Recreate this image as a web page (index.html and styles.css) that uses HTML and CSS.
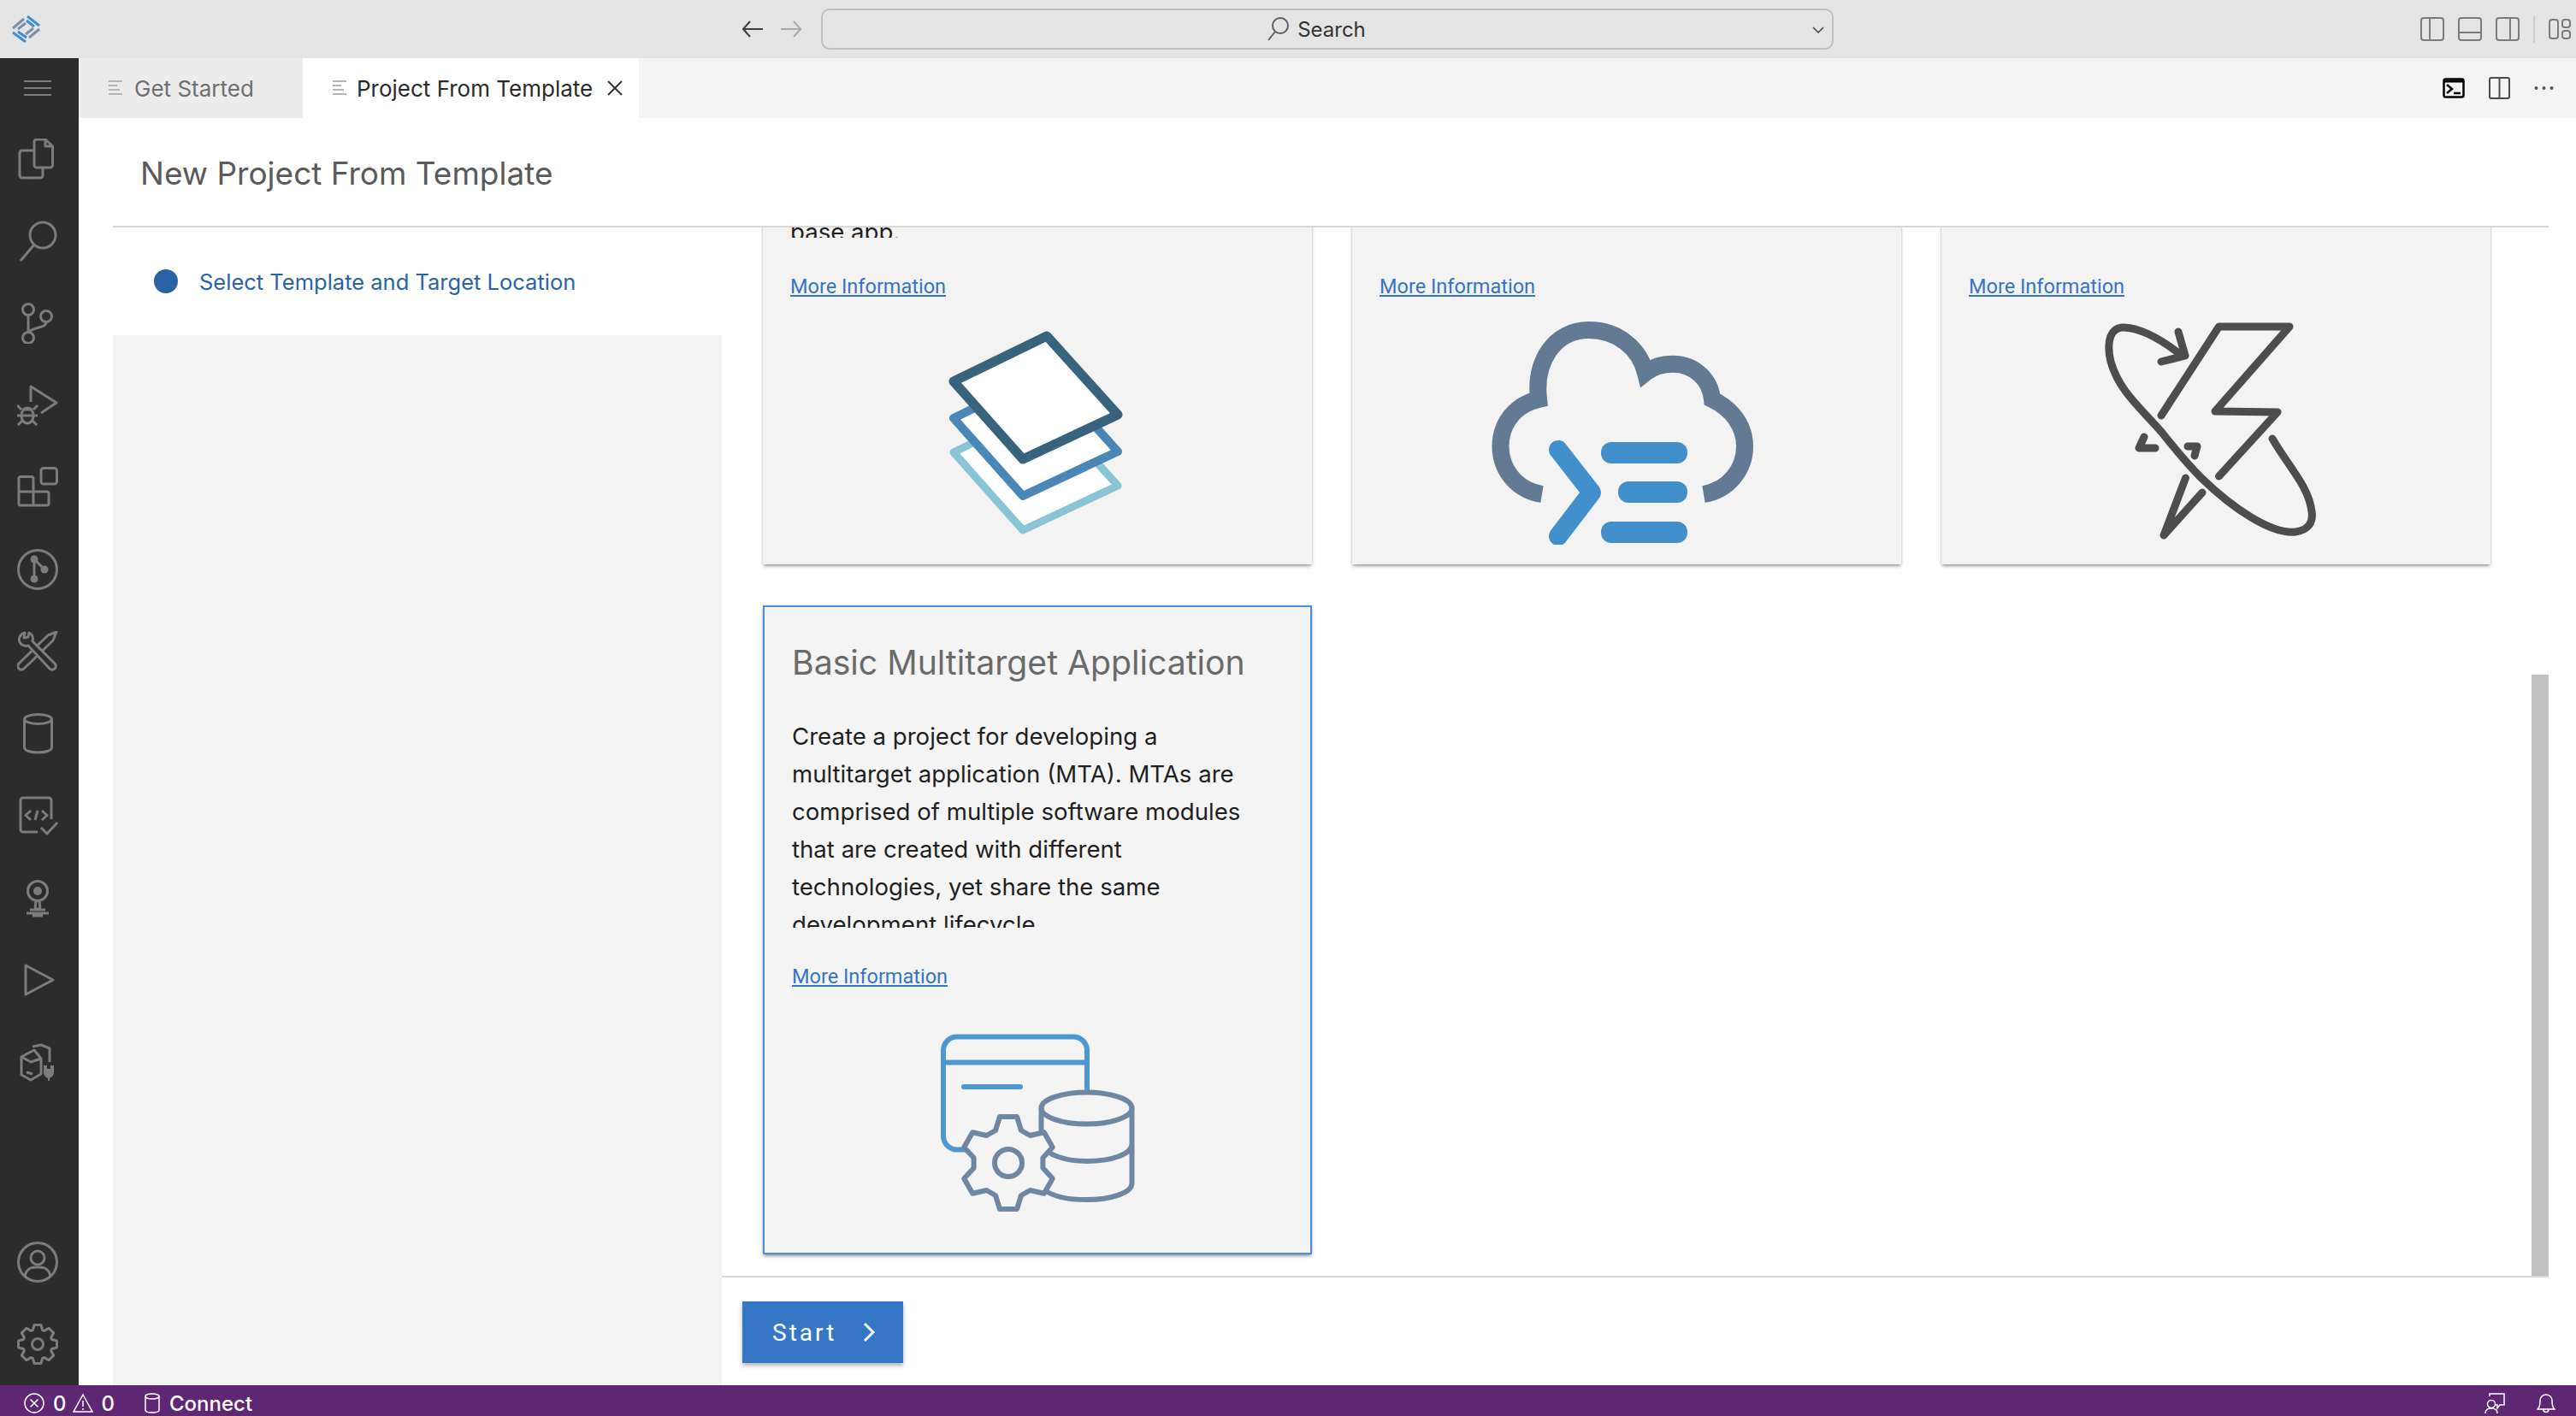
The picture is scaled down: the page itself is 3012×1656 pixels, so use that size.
FILE: index.html
```html
<!DOCTYPE html>
<html lang="en">
<head>
  <meta charset="UTF-8">
  <title>New Project From Template</title>
  <link rel="stylesheet" href="styles.css">
</head>
<body>

  <header class="titlebar">
    <div class="titlebar-left">
      <svg class="logo" viewBox="0 0 33 32" fill="none" stroke-width="3">
        <path stroke="#3d8fd1" d="M18 1 32 12M17 6 26 13M1 20 16 31M7 19 17 26"/>
        <path stroke="#7c8fa6" d="M32 16 20 26M25 15 16 22M1 15 14 4M7 16 16 9"/>
      </svg>
      <div class="nav-arrows">
        <svg class="nav-arrow" viewBox="0 0 25 20"><path d="M9 1 1 10 9 19M1 10H24"/></svg>
        <svg class="nav-arrow nav-arrow-off" viewBox="0 0 25 20"><path d="M16 1 24 10 16 19M1 10H24"/></svg>
      </div>
    </div>
    <div class="command-center">
      <svg class="command-search" viewBox="0 0 26 28"><circle cx="16" cy="10" r="9"/><path d="M10 17 2 27"/></svg>
      <span>Search</span>
      <svg class="command-chevron" viewBox="0 0 14 8"><path d="M1 1 7 7 13 1"/></svg>
    </div>
    <div class="layout-icons">
      <svg class="layout-icon" viewBox="0 0 28 28"><rect x="1" y="1" width="26" height="26" rx="3"/><path d="M11 1V27"/></svg>
      <svg class="layout-icon" viewBox="0 0 28 28"><rect x="1" y="1" width="26" height="26" rx="3"/><path d="M1 18H27"/></svg>
      <svg class="layout-icon" viewBox="0 0 28 28"><rect x="1" y="1" width="26" height="26" rx="3"/><path d="M17 1V27"/></svg>
      <span class="layout-sep"></span>
      <svg class="layout-icon layout-icon-last" viewBox="0 0 26 24"><rect x="1" y="1" width="10" height="22" rx="3"/><rect x="16" y="1" width="9" height="9" rx="3"/><rect x="16" y="14" width="9" height="9" rx="3"/></svg>
    </div>
  </header>

  <div class="workbench">
    <nav class="sidebar">
      <div class="side-menu">
        <svg class="side-icon" viewBox="0 0 32 18"><path d="M0 1H32M0 9H32M0 17H32"/></svg>
      </div>
      <div class="side-item">
        <svg class="side-icon" viewBox="0 0 48 48"><path d="M20 31V4a3 3 0 0 1 3-3H33L41.5 9V31a3 3 0 0 1-3 3H23a3 3 0 0 1-3-3ZM33 1V9H41.5"/><path d="M20 14H6a3 3 0 0 0-3 3V43a3 3 0 0 0 3 3H27a3 3 0 0 0 3-3V34"/></svg>
      </div>
      <div class="side-item">
        <svg class="side-icon" viewBox="0 0 48 48"><circle cx="30" cy="17" r="15"/><path d="M20 28 4 47"/></svg>
      </div>
      <div class="side-item">
        <svg class="side-icon" viewBox="0 0 48 48"><circle cx="13" cy="8" r="6.5"/><circle cx="13" cy="41" r="6.5"/><circle cx="34" cy="16" r="6.5"/><path d="M13 14.500V34.500M34 22.500C34 30 20 28 14 34"/></svg>
      </div>
      <div class="side-item">
        <svg class="side-icon" viewBox="0 0 48 48"><path d="M16 20V2L46 21 28 33"/><ellipse cx="12" cy="36" rx="7" ry="9"/><path d="M6 29H18M0 24 5 29M24 24 19 29M0 36H24M1 47 6 42M23 47 18 42"/></svg>
      </div>
      <div class="side-item">
        <svg class="side-icon" viewBox="0 0 48 48"><rect x="28" y="1.500" width="18.500" height="18.500" rx="3"/><path d="M4 11.500H17a2 2 0 0 1 2 2V29H35a2 2 0 0 1 2 2V43a2 2 0 0 1-2 2H4a2 2 0 0 1-2-2V13.500a2 2 0 0 1 2-2ZM2 29H19V45"/></svg>
      </div>
      <div class="side-item">
        <svg class="side-icon" viewBox="0 0 48 48"><circle cx="24" cy="24" r="22.500"/><path d="M20 12V35M20 12 32 24"/><circle class="side-solid" cx="20" cy="12" r="4.500"/><circle class="side-solid" cx="32" cy="24" r="4.500"/><circle class="side-solid" cx="20" cy="35" r="4.500"/></svg>
      </div>
      <div class="side-item">
        <svg class="side-icon" viewBox="0 0 48 48"><path d="M46 1 36 5 2 38a4 4 0 0 0 6 6L42 11Z"/><path class="side-mask" d="M9 2C4 3 1 8 3 13 5 17 10 18 13 17L38 44a4 4 0 0 0 6-6L18 12C19 8 18 4 14 2L13 7 8 8Z"/></svg>
      </div>
      <div class="side-item">
        <svg class="side-icon" viewBox="0 0 48 48"><ellipse cx="24.500" cy="7" rx="16" ry="5.500"/><path d="M8.500 7V40C8.500 44 16 46 24.500 46S40.500 44 40.500 40V7"/></svg>
      </div>
      <div class="side-item">
        <svg class="side-icon" viewBox="0 0 48 48"><path d="M40 28V6a3 3 0 0 0-3-3H7a3 3 0 0 0-3 3V40a3 3 0 0 0 3 3H24M28 38 35 45 47 32M16 18 10 23.500 16 29M21 29 24 18M29 18 35 23.500 29 29"/></svg>
      </div>
      <div class="side-item">
        <svg class="side-icon" viewBox="0 0 48 48"><circle cx="24" cy="16" r="11.500"/><circle class="side-solid" cx="24" cy="16" r="5"/><path d="M22 27 21 37H27L26 27M15 38H33M11 42H37M18 45H30"/></svg>
      </div>
      <div class="side-item">
        <svg class="side-icon" viewBox="0 0 48 48"><path d="M10 7 42 24 10 41Z"/></svg>
      </div>
      <div class="side-item">
        <svg class="side-icon" viewBox="0 0 48 48"><path d="M28 20V38L16 45 5 39V18L20 10ZM5 18 16 24 28 20M18 6 28 4 38 8V24M11 36 18 38"/><path class="side-solid" d="M31 28H35V32H39V28H43V36C43 40 40 42 38 43V46H36V43C34 42 31 40 31 36Z"/></svg>
      </div>
      <div class="side-spacer"></div>
      <div class="side-item">
        <svg class="side-icon" viewBox="0 0 48 48"><circle cx="24" cy="24" r="22.500"/><circle cx="24" cy="19" r="8"/><path d="M9 40C12 30 18 30 24 30S36 30 39 40"/></svg>
      </div>
      <div class="side-item">
        <svg class="side-icon" viewBox="-24 -24 48 48"><polygon points="-5.500,-16.500 -4,-22.500 4,-22.500 5.500,-16.500 7.800,-15.600 13.100,-18.700 18.700,-13.100 15.600,-7.800 16.500,-5.500 22.500,-4 22.500,4 16.500,5.500 15.600,7.800 18.700,13.100 13.100,18.700 7.800,15.600 5.500,16.500 4,22.500 -4,22.500 -5.500,16.500 -7.800,15.600 -13.100,18.700 -18.700,13.100 -15.600,7.800 -16.500,5.500 -22.500,4 -22.500,-4 -16.500,-5.500 -15.600,-7.800 -18.700,-13.100 -13.100,-18.700 -7.800,-15.600"/><circle r="6.500"/></svg>
      </div>
    </nav>

    <main class="editor">
      <div class="tabs">
        <div class="tab">
          <svg class="tab-icon" viewBox="0 0 16 18"><path d="M0 1H16M0 6H10M0 11H13M0 16H16"/></svg>
          <span>Get Started</span>
        </div>
        <div class="tab tab-active">
          <svg class="tab-icon" viewBox="0 0 16 18"><path d="M0 1H16M0 6H10M0 11H13M0 16H16"/></svg>
          <span>Project From Template</span>
          <svg class="tab-close" viewBox="0 0 18 18"><path d="M1 1 17 17M17 1 1 17"/></svg>
        </div>
        <div class="tab-actions">
          <svg class="tab-terminal" viewBox="0 0 26 24"><rect x="1.500" y="1.500" width="23" height="21" rx="2"/><path class="tab-terminal-bar" d="M1.500 4H24.500"/><path d="M5 8 11 13 5 18M13 18H21"/></svg>
          <svg class="tab-split" viewBox="0 0 25 26"><rect x="1" y="1" width="23" height="24" rx="2"/><path d="M12.500 1V25"/></svg>
          <svg class="tab-more" viewBox="0 0 23 6"><circle cx="2.500" cy="3" r="2"/><circle cx="11.500" cy="3" r="2"/><circle cx="20.500" cy="3" r="2"/></svg>
        </div>
      </div>

      <div class="wizard">
        <div class="wizard-header">
          <h1>New Project From Template</h1>
        </div>
        <div class="wizard-body">
          <aside class="steps">
            <div class="step">
              <span class="step-dot"></span>
              <span>Select Template and Target Location</span>
            </div>
            <div class="steps-panel"></div>
          </aside>

          <section class="content">
            <div class="viewport">
              <div class="cards">
                <article class="card">
                  <div class="card-text">
                    <p class="card-desc card-desc-tail">base app.</p>
                  </div>
                  <a class="card-link" href="#">More Information</a>
                  <div class="card-image">
                    <svg viewBox="0 0 320 264">
                      <path d="M171 103 62 156 143 247 254 195Z" fill="#fff" stroke="#89c5d7" stroke-width="9" stroke-linejoin="round"/>
                      <path d="M171 63 62 116 143 207 254 155Z" fill="#fff" stroke="#4a87b7" stroke-width="10" stroke-linejoin="round"/>
                      <path d="M171 20 62 73 143 164 254 112Z" fill="#fff" stroke="#37637c" stroke-width="11" stroke-linejoin="round"/>
                    </svg>
                  </div>
                </article>

                <article class="card">
                  <div class="card-text"></div>
                  <a class="card-link" href="#">More Information</a>
                  <div class="card-image">
                    <svg viewBox="0 0 320 264" fill="none">
                      <path stroke="#637a94" stroke-width="20" d="M61 205C30 200 12.500 175 12.500 149 12.500 122 30 100 57 94 52 50 75 13 116 13 150 13 175 35 182 63 192 55 202 52.700 214 52.700 240 52.700 258 72 260 94 283 105 298 125 298 149 298 175 280 200 250 205"/>
                      <path stroke="#4190cc" stroke-width="22" stroke-linecap="round" stroke-linejoin="round" d="M80 153 119 203 80 254"/>
                      <rect x="130" y="144" width="101" height="25" rx="12" fill="#4190cc"/>
                      <rect x="150" y="190" width="81" height="25" rx="12" fill="#4190cc"/>
                      <rect x="130" y="237" width="101" height="25" rx="12" fill="#4190cc"/>
                    </svg>
                  </div>
                </article>

                <article class="card">
                  <div class="card-text"></div>
                  <a class="card-link" href="#">More Information</a>
                  <div class="card-image">
                    <svg viewBox="0 0 320 264" fill="none" stroke="#4d4d4d" stroke-width="9" stroke-linecap="round" stroke-linejoin="round">
                      <path d="M120 43C92 20 66 9 50 10 38 11 31 24 37 50 47 85 72 104 97 133 112 152 127 170 143 186 180 222 225 252 253 249 268 247 274 238 272 225 268 195 245 173 226 140"/>
                      <path d="M116 15 124 43 96 50"/>
                      <path d="M96 113 163.500 9H246L159 108 232 109 163.500 184"/>
                      <path d="M76 138 70 151H89M127 149H138L135 160"/>
                      <path d="M124.500 186 99 253 144 203"/>
                    </svg>
                  </div>
                </article>

                <article class="card card-selected">
                  <div class="card-text">
                    <h3 class="card-title">Basic Multitarget Application</h3>
                    <p class="card-desc">Create a project for developing a multitarget application (MTA). MTAs are comprised of multiple software modules that are created with different technologies, yet share the same development lifecycle.</p>
                  </div>
                  <a class="card-link" href="#">More Information</a>
                  <div class="card-image">
                    <svg viewBox="0 0 320 264" fill="none" stroke-width="6" stroke-linejoin="round">
                      <path stroke="#4e98d2" d="M217 96V48A16 16 0 0 0 201 32.500H65A16 16 0 0 0 49 48V148A16 16 0 0 0 65 164.500H78M49 62.500H217"/>
                      <path stroke="#4e98d2" stroke-linecap="round" d="M73 91H139"/>
                      <g stroke="#6f87a3">
                        <ellipse cx="216.500" cy="116" rx="53" ry="18.500"/>
                        <path d="M163.500 116V160M269.500 116V204C269.500 215 245 223 216.500 223 195 223 177 219 168 212M163.500 158C170 172 195 178 216.500 178 245 178 269.500 170 269.500 158"/>
                        <g transform="translate(125 180)">
                          <polygon fill="#f4f4f4" points="-15,-38 -10,-54 10,-54 15,-38 25.400,-32 41.800,-35.700 51.800,-18.300 40.400,-6 40.400,6 51.800,18.300 41.800,35.700 25.400,32 15,38 10,54 -10,54 -15,38 -25.400,32 -41.800,35.700 -51.800,18.300 -40.400,6 -40.400,-6 -51.800,-18.300 -41.800,-35.700 -25.400,-32"/>
                          <circle r="16"/>
                        </g>
                      </g>
                    </svg>
                  </div>
                </article>
              </div>
              <div class="scroll-thumb"></div>
            </div>
            <div class="wizard-footer">
              <button class="start-btn">
                <span>Start</span>
                <svg viewBox="0 0 15 24"><path d="M2 2 12 12 2 22"/></svg>
              </button>
            </div>
          </section>
        </div>
      </div>
    </main>
  </div>

  <footer class="statusbar">
    <svg class="status-icon status-error" viewBox="0 0 24 24"><circle cx="12" cy="12" r="11"/><path d="M7.500 7.500 16.500 16.500M16.500 7.500 7.500 16.500"/></svg>
    <span class="status-count">0</span>
    <svg class="status-icon status-warn" viewBox="0 0 24 24"><path d="M12 2 23 22H1ZM12 9V16M12 18V20"/></svg>
    <span class="status-count">0</span>
    <svg class="status-icon status-db" viewBox="0 0 18 24"><ellipse cx="9" cy="4" rx="8" ry="3"/><path d="M1 4V20C1 22 5 23 9 23S17 22 17 20V4"/></svg>
    <span class="status-connect">Connect</span>
    <span class="status-spacer"></span>
    <svg class="status-icon status-feedback" viewBox="0 0 24 24"><path d="M6 4V1H23V14H18L15 18V14H13"/><circle cx="8" cy="13" r="4.500"/><path d="M1 24C1 20 4 18 8 18S15 20 15 24"/></svg>
    <svg class="status-icon status-bell" viewBox="0 0 22 24"><path d="M1 19C4 17 4 13 4 9A7 7 0 0 1 18 9C18 13 18 17 21 19ZM8 19.500A3 3 0 0 0 14 19.500"/></svg>
  </footer>

</body>
</html>
```

FILE: styles.css
```css
* {
  box-sizing: border-box;
}

body {
  margin: 0;
  height: 100vh;
  display: flex;
  flex-direction: column;
  overflow: hidden;
  font-family: Inter, "Liberation Sans", sans-serif;
  background-color: #fff;
}

svg {
  display: block;
  flex-shrink: 0;
}

/* title bar */
.titlebar {
  height: 68px;
  flex-shrink: 0;
  display: grid;
  grid-template-columns: 960px 1184px 1fr;
  align-items: center;
  background-color: #e4e4e4;
}

.titlebar-left {
  display: flex;
  align-items: center;
  justify-content: space-between;
  padding-left: 14px;
  padding-right: 23px;
}

.logo {
  width: 33px;
  height: 32px;
}

.nav-arrows {
  display: flex;
  gap: 19px;
}

.nav-arrow {
  width: 25px;
  height: 20px;
  fill: none;
  stroke: #3f3f3f;
  stroke-width: 2;
}

.nav-arrow-off {
  stroke: #a9a9a9;
}

.command-center {
  position: relative;
  height: 48px;
  display: flex;
  align-items: center;
  justify-content: center;
  gap: 10px;
  padding-right: 26px;
  border: 2px solid #c0c0c0;
  border-radius: 10px;
  font-size: 24px;
  color: #333;
}

.command-search {
  width: 26px;
  height: 28px;
  fill: none;
  stroke: #5f5f5f;
  stroke-width: 2;
}

.command-chevron {
  position: absolute;
  right: 9px;
  top: 19px;
  width: 14px;
  height: 8px;
  fill: none;
  stroke: #444;
  stroke-width: 1.500;
}

.layout-icons {
  display: flex;
  align-items: center;
  padding-left: 686px;
  gap: 16px;
}

.layout-icon {
  width: 28px;
  height: 28px;
  fill: none;
  stroke: #7b7b7b;
  stroke-width: 2;
}

.layout-sep {
  width: 2px;
  height: 31px;
  background-color: #cacaca;
}

.layout-icon-last {
  width: 26px;
  height: 24px;
}

/* side bar */
.workbench {
  flex: 1;
  display: flex;
  min-height: 0;
}

.sidebar {
  width: 92px;
  flex-shrink: 0;
  display: flex;
  flex-direction: column;
  background-color: #2c2c2c;
}

.side-menu {
  height: 70px;
  display: flex;
  align-items: center;
  padding-left: 28px;
}

.side-menu .side-icon {
  width: 32px;
  height: 18px;
  stroke-width: 2;
}

.side-item {
  height: 96px;
  display: flex;
  align-items: center;
  padding-left: 20px;
}

.side-spacer {
  flex: 1;
}

.side-icon {
  width: 48px;
  height: 48px;
  fill: none;
  stroke: #7c7c7c;
  stroke-width: 3;
  stroke-linejoin: round;
}

.side-solid {
  fill: #7c7c7c;
  stroke: none;
}

.side-mask {
  fill: #2c2c2c;
}

/* tabs */
.editor {
  flex: 1;
  min-width: 0;
  display: flex;
  flex-direction: column;
}

.tabs {
  height: 70px;
  flex-shrink: 0;
  display: flex;
  align-items: center;
  background-color: #f3f3f3;
  font-size: 26px;
}

.tab {
  height: 100%;
  width: 262px;
  display: flex;
  align-items: center;
  gap: 14px;
  padding-left: 35px;
  background-color: #ececec;
  color: #6f6f6f;
}

.tab-active {
  width: 393px;
  padding-left: 35px;
  gap: 12px;
  background-color: #fff;
  color: #2a2a2a;
}

.tab-icon {
  width: 16px;
  height: 18px;
  fill: none;
  stroke: #b5b5b5;
  stroke-width: 2;
}

.tab-close {
  width: 18px;
  height: 18px;
  margin-left: 5px;
  fill: none;
  stroke: #333;
  stroke-width: 2;
}

.tab-actions {
  flex: 1;
  display: flex;
  align-items: center;
  justify-content: flex-end;
  gap: 28px;
  padding-right: 26px;
}

.tab-terminal {
  width: 26px;
  height: 24px;
  fill: none;
  stroke: #000;
  stroke-width: 2.500;
}

.tab-terminal-bar {
  stroke-width: 3;
}

.tab-split {
  width: 25px;
  height: 26px;
  fill: none;
  stroke: #4a4a4a;
  stroke-width: 2;
}

.tab-more {
  width: 23px;
  height: 6px;
  fill: #555;
}

/* wizard */
.wizard {
  flex: 1;
  min-height: 0;
  display: flex;
  flex-direction: column;
  margin-left: 40px;
  margin-right: 32px;
}

.wizard-header {
  height: 128px;
  flex-shrink: 0;
  display: flex;
  align-items: center;
  padding-left: 32px;
  padding-top: 2px;
  border-bottom: 2px solid #d8d8d8;
}

.wizard-header h1 {
  margin: 0;
  font-size: 37px;
  font-weight: 400;
  color: #5a5a5a;
}

.wizard-body {
  flex: 1;
  min-height: 0;
  display: flex;
}

.steps {
  width: 712px;
  flex-shrink: 0;
  display: flex;
  flex-direction: column;
}

.step {
  height: 126px;
  display: flex;
  align-items: center;
  gap: 25px;
  padding-left: 48px;
  font-size: 25.500px;
  color: #2a63a5;
}

.step-dot {
  width: 28px;
  height: 28px;
  border-radius: 50%;
  background-color: #2a62a4;
}

.steps-panel {
  flex: 1;
  background-color: #f3f3f3;
}

.content {
  flex: 1;
  min-width: 0;
  display: flex;
  flex-direction: column;
}

.viewport {
  position: relative;
  flex: 1;
  min-height: 0;
  display: flex;
  flex-direction: column;
  justify-content: flex-end;
  overflow: hidden;
  padding: 0 0 25px 48px;
  border-bottom: 2px solid #d8d8d8;
}

.cards {
  flex-shrink: 0;
  display: grid;
  grid-template-columns: repeat(3, 641.500px);
  column-gap: 47.500px;
  row-gap: 48px;
}

.card {
  height: 759px;
  display: flex;
  flex-direction: column;
  padding: 0 32px;
  background-color: #f3f3f3;
  box-shadow: 0 3px 4px -1px rgba(0, 0, 0, 0.4), 0 0 3px rgba(0, 0, 0, 0.12);
}

.card-selected {
  padding-left: 34px;
  background-color: #f4f4f4;
  outline: 2px solid #4a90e2;
  outline-offset: -2px;
}

.card-text {
  height: 377px;
  flex-shrink: 0;
  overflow: hidden;
  padding-top: 41px;
}

.card-title {
  margin: 0 0 38px;
  height: 52px;
  line-height: 52px;
  font-size: 39.200px;
  font-weight: 400;
  color: #6a6a6a;
}

.card-desc {
  margin: 0;
  max-width: 540px;
  line-height: 44px;
  font-size: 27.600px;
  color: #1f1f1f;
}

.card-desc-tail {
  padding-top: 307px;
}

.card-link {
  margin-top: 42px;
  height: 30px;
  line-height: 30px;
  font-family: Roboto, sans-serif;
  font-size: 23.500px;
  color: #3574c8;
}

.card-image {
  flex: 1;
  display: flex;
  justify-content: center;
  align-items: center;
}

.card-image svg {
  width: 320px;
  height: 264px;
}

.scroll-thumb {
  position: absolute;
  top: 523px;
  right: 0;
  bottom: 0;
  width: 20px;
  background-color: #c1c1c1;
}

.wizard-footer {
  height: 126px;
  flex-shrink: 0;
  padding: 28px 0 0 24px;
}

.start-btn {
  width: 188px;
  height: 72px;
  display: flex;
  align-items: center;
  gap: 31px;
  padding: 0 0 0 35px;
  border: none;
  background-color: #3677c5;
  box-shadow: 0 3px 5px rgba(0, 0, 0, 0.3);
  font-family: Roboto, sans-serif;
  font-size: 28px;
  letter-spacing: 3px;
  color: #fff;
}

.start-btn svg {
  width: 15px;
  height: 24px;
  fill: none;
  stroke: #fff;
  stroke-width: 3;
}

/* status bar */
.statusbar {
  height: 36px;
  flex-shrink: 0;
  display: flex;
  align-items: center;
  padding-left: 28px;
  padding-top: 6px;
  background-color: #5e2673;
  font-size: 24px;
  font-weight: 500;
  color: #fff;
}

.status-icon {
  width: 24px;
  height: 24px;
  fill: none;
  stroke: #fff;
  stroke-width: 1.500;
}

.status-count {
  margin-left: 10px;
  margin-right: 7px;
}

.status-db {
  width: 18px;
  margin-left: 28px;
}

.status-connect {
  margin-left: 11px;
}

.status-spacer {
  flex: 1;
}

.status-bell {
  width: 22px;
  margin-left: 37px;
  margin-right: 24px;
}
```
